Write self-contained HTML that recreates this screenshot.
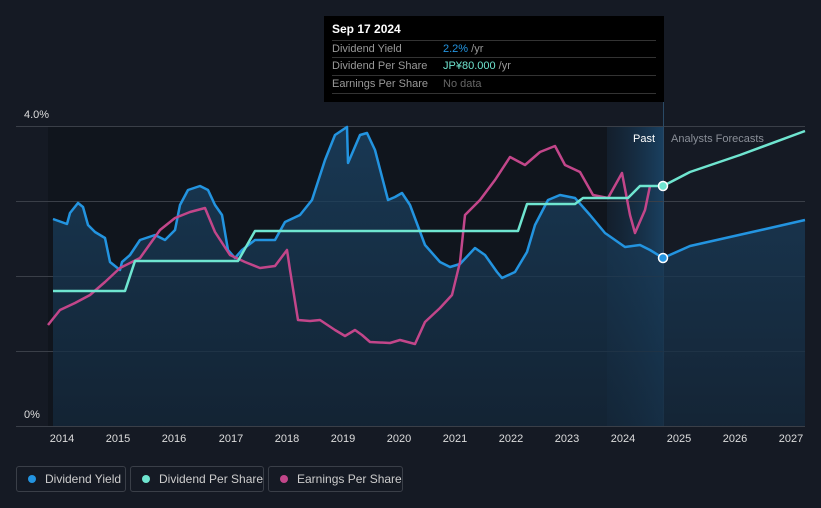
<!DOCTYPE html>
<html><head><meta charset="utf-8"><style>
body{margin:0;width:821px;height:508px;background:#151a24;font-family:"Liberation Sans",sans-serif;overflow:hidden;position:relative}
.tt{position:absolute;left:324px;top:16px;width:340px;height:86px;background:#000;}
.tt .h{position:absolute;left:8px;top:6px;color:#fff;font-size:12px;font-weight:bold}
.tt .r{position:absolute;left:8px;width:324px;height:17px;border-top:1px solid #333;font-size:11px;color:#999;line-height:17px}
.tt .r span{position:absolute;left:111px}
.lg{position:absolute;top:466px;height:26px;border:1px solid #3a3f48;border-radius:3px;color:#ccc;font-size:12px;line-height:24px;box-sizing:border-box;white-space:nowrap}
.lg i{position:absolute;left:11px;top:8px;width:8px;height:8px;border-radius:50%}
.lg b{font-weight:normal;position:absolute;left:28px;white-space:nowrap}
.yr{position:absolute;top:433px;font-size:11px;color:#ddd;width:40px;text-align:center}
</style></head><body>
<svg width="821" height="508" style="position:absolute;left:0;top:0">
<defs><linearGradient id="g" x1="0" y1="0" x2="0" y2="1"><stop offset="0" stop-color="#1b4466"/><stop offset="1" stop-color="#14283b"/></linearGradient>
<linearGradient id="p" x1="0" y1="0" x2="1" y2="0"><stop offset="0" stop-color="#1a3550" stop-opacity="0.3"/><stop offset="1" stop-color="#1c4a70" stop-opacity="0.8"/></linearGradient></defs>
<rect x="48" y="126" width="615" height="300" fill="#10151d"/>
<rect x="607" y="126" width="56" height="300" fill="url(#p)"/>
<g stroke="#3a3f48" stroke-width="1"><line x1="16" y1="126.5" x2="805" y2="126.5"/><line x1="16" y1="201.5" x2="805" y2="201.5"/><line x1="16" y1="276.5" x2="805" y2="276.5"/><line x1="16" y1="351.5" x2="805" y2="351.5"/><line x1="16" y1="426.5" x2="805" y2="426.5"/></g>
<line x1="663.5" y1="100" x2="663.5" y2="426" stroke="#2a4a66"/>
<path d="M53,219 L67,224 L70,213 L78,203 L83,207 L88,225 L95,232 L105,238 L110,262 L120,270 L122,262 L130,255 L140,240 L155,235 L165,240 L175,230 L180,205 L188,190 L200,186 L208,190 L215,205 L222,215 L228,250 L235,258 L242,250 L255,240 L275,240 L285,222 L300,215 L312,200 L325,160 L335,135 L347,127 L348,163 L360,135 L367,133 L375,150 L388,200 L395,197 L402,193 L410,205 L425,245 L440,262 L450,267 L460,264 L475,248 L485,255 L497,272 L502,278 L515,272 L527,252 L535,225 L548,200 L560,195 L575,198 L590,215 L605,233 L625,247 L640,245 L650,250 L663,258 L690,246 L730,237 L770,228 L805,220 L805,426 L53,426Z" fill="url(#g)" opacity="0.75"/>
<path d="M53,219 L67,224 L70,213 L78,203 L83,207 L88,225 L95,232 L105,238 L110,262 L120,270 L122,262 L130,255 L140,240 L155,235 L165,240 L175,230 L180,205 L188,190 L200,186 L208,190 L215,205 L222,215 L228,250 L235,258 L242,250 L255,240 L275,240 L285,222 L300,215 L312,200 L325,160 L335,135 L347,127 L348,163 L360,135 L367,133 L375,150 L388,200 L395,197 L402,193 L410,205 L425,245 L440,262 L450,267 L460,264 L475,248 L485,255 L497,272 L502,278 L515,272 L527,252 L535,225 L548,200 L560,195 L575,198 L590,215 L605,233 L625,247 L640,245 L650,250 L663,258 L690,246 L730,237 L770,228 L805,220" fill="none" stroke="#2394e0" stroke-width="2.5" stroke-linejoin="round"/>
<path d="M48,325 L60,310 L75,303 L90,295 L105,282 L120,268 L140,258 L160,230 L175,218 L190,212 L205,208 L215,232 L230,255 L245,262 L260,268 L275,266 L287,250 L290,270 L298,320 L310,321 L320,320 L335,330 L345,336 L355,330 L362,335 L370,342 L390,343 L400,340 L415,344 L425,322 L440,308 L452,295 L460,262 L465,215 L480,200 L495,180 L510,157 L525,165 L540,152 L555,146 L565,165 L580,172 L593,195 L608,198 L622,173 L630,215 L635,233 L645,210 L650,186" fill="none" stroke="#c2468a" stroke-width="2.5" stroke-linejoin="round"/>
<path d="M53,291 L125,291 L135,261 L238,261 L255,231 L518,231 L527,204 L575,204 L583,198 L628,198 L640,186 L663,186 L690,172 L740,155 L805,131" fill="none" stroke="#6fe5d0" stroke-width="2.5" stroke-linejoin="round"/>
<circle cx="663" cy="186" r="4.5" fill="#6fe5d0" stroke="#fff" stroke-width="1.5"/>
<circle cx="663" cy="258" r="4.5" fill="#2394e0" stroke="#fff" stroke-width="1.5"/>
<text x="24" y="118" fill="#ddd" font-size="11" font-family="Liberation Sans">4.0%</text>
<text x="24" y="418" fill="#ddd" font-size="11" font-family="Liberation Sans">0%</text>
<text x="655" y="142" fill="#fff" font-size="11" text-anchor="end" font-family="Liberation Sans">Past</text>
<text x="671" y="142" fill="#8a8f98" font-size="11" font-family="Liberation Sans">Analysts Forecasts</text>
</svg>
<div class="tt"><div class="h">Sep 17 2024</div>
<div class="r" style="top:24px">Dividend Yield<span><em style="font-style:normal;color:#2394e0">2.2%</em> /yr</span></div>
<div class="r" style="top:41px">Dividend Per Share<span><em style="font-style:normal;color:#6fe5d0">JP¥80.000</em> /yr</span></div>
<div class="r" style="top:59px;border-bottom:1px solid #333">Earnings Per Share<span style="color:#666">No data</span></div>
</div>
<div class="yr" style="left:42px">2014</div><div class="yr" style="left:98px">2015</div><div class="yr" style="left:154px">2016</div><div class="yr" style="left:211px">2017</div><div class="yr" style="left:267px">2018</div><div class="yr" style="left:323px">2019</div><div class="yr" style="left:379px">2020</div><div class="yr" style="left:435px">2021</div><div class="yr" style="left:491px">2022</div><div class="yr" style="left:547px">2023</div><div class="yr" style="left:603px">2024</div><div class="yr" style="left:659px">2025</div><div class="yr" style="left:715px">2026</div><div class="yr" style="left:771px">2027</div>
<div class="lg" style="left:16px;width:110px"><i style="background:#2394e0"></i><b>Dividend Yield</b></div>
<div class="lg" style="left:130px;width:134px"><i style="background:#6fe5d0"></i><b>Dividend Per Share</b></div>
<div class="lg" style="left:268px;width:135px"><i style="background:#c2468a"></i><b>Earnings Per Share</b></div>
</body></html>
